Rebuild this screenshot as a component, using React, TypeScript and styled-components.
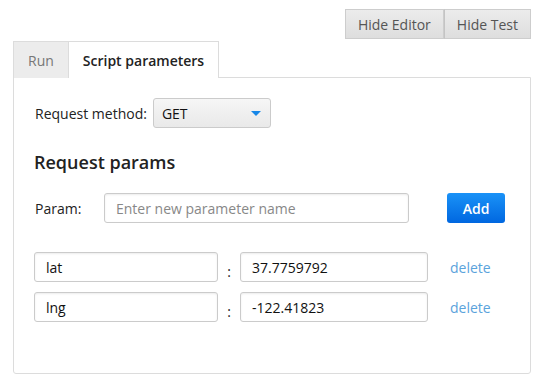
import React from 'react';
import styled, { createGlobalStyle } from 'styled-components';

const GlobalStyle = createGlobalStyle`
  body {
    margin: 0;
    background: #fff;
    font-family: "Open Sans", "Liberation Sans", sans-serif;
    font-size: 14px;
    color: #222;
  }
`;

const Page = styled.div`
  width: 542px;
  box-sizing: border-box;
  padding: 9px 11px 0 13px;
`;

const Toolbar = styled.div`
  display: flex;
  justify-content: flex-end;
  margin-bottom: 2px;
`;

const ToolButton = styled.button`
  height: 30px;
  padding: 0 12px;
  border: 1px solid #cdcdcd;
  background: linear-gradient(#ececec, #dedede);
  color: #555;
  font-family: inherit;
  font-size: 14px;
  & + & {
    border-left: 1px solid #c4c4c4;
  }
`;

const TabBar = styled.div`
  display: flex;
`;

const Tab = styled.div<{ $active?: boolean }>`
  height: 37px;
  box-sizing: border-box;
  padding: 0 14px;
  display: flex;
  align-items: center;
  border: 1px solid #dcdcdc;
  border-bottom: none;
  background: ${(p) => (p.$active ? '#fff' : '#ececec')};
  color: ${(p) => (p.$active ? '#222' : '#777')};
  font-weight: ${(p) => (p.$active ? 600 : 400)};
  margin-bottom: -1px;
  position: relative;
  & + & {
    border-left: none;
  }
`;

const Panel = styled.div`
  border: 1px solid #dcdcdc;
  border-radius: 0 0 3px 3px;
  padding: 20px 0 51px 20px;
`;

const MethodRow = styled.div`
  display: flex;
  align-items: center;
  gap: 6px;
  padding-left: 1px;
`;

const Select = styled.div`
  width: 118px;
  height: 30px;
  box-sizing: border-box;
  border: 1px solid #cbcbcb;
  border-radius: 3px;
  background: linear-gradient(#f6f6f6, #e9e9e9);
  display: flex;
  align-items: center;
  justify-content: space-between;
  padding: 0 9px 0 8px;
  color: #111;
`;

const Caret = styled.span`
  width: 0;
  height: 0;
  border-left: 5px solid transparent;
  border-right: 5px solid transparent;
  border-top: 5px solid #1787e8;
`;

const Heading = styled.h2`
  margin: 22px 0 0;
  font-size: 18px;
  line-height: 24px;
  font-weight: 600;
  color: #222;
`;

const ParamRow = styled.div`
  display: flex;
  align-items: center;
  margin-top: 19px;
`;

const Label = styled.span`
  width: 70px;
  padding-left: 1px;
  box-sizing: border-box;
`;

const TextInput = styled.input<{ $width: number }>`
  width: ${(p) => p.$width}px;
  height: 30px;
  box-sizing: border-box;
  border: 1px solid #cbcbcb;
  border-radius: 3px;
  box-shadow: inset 0 1px 2px rgba(0, 0, 0, 0.08);
  padding: 0 10px 0 11px;
  font-family: inherit;
  font-size: 14px;
  color: #111;
  &::placeholder {
    color: #888;
  }
`;

const AddButton = styled.button`
  margin-left: 38px;
  width: 58px;
  height: 30px;
  border: none;
  border-radius: 3px;
  background: linear-gradient(#1a92f7, #0067e0);
  color: #fff;
  font-family: inherit;
  font-size: 14px;
  font-weight: 600;
`;

const List = styled.div`
  display: flex;
  flex-direction: column;
  gap: 10px;
  margin-top: 29px;
`;

const PairRow = styled.div`
  display: flex;
  align-items: center;
`;

const Colon = styled.span`
  width: 22px;
  text-align: center;
  padding-top: 9px;
`;

const Delete = styled.a`
  margin-left: 22px;
  color: #5aa3dc;
  cursor: pointer;
`;

const params = [
  { name: 'lat', value: '37.7759792' },
  { name: 'lng', value: '-122.41823' },
];

export default function App() {
  return (
    <Page>
      <GlobalStyle />
      <Toolbar>
        <ToolButton>Hide Editor</ToolButton>
        <ToolButton>Hide Test</ToolButton>
      </Toolbar>
      <TabBar>
        <Tab>Run</Tab>
        <Tab $active>Script parameters</Tab>
      </TabBar>
      <Panel>
        <MethodRow>
          <span>Request method:</span>
          <Select>
            <span>GET</span>
            <Caret />
          </Select>
        </MethodRow>
        <Heading>Request params</Heading>
        <ParamRow>
          <Label>Param:</Label>
          <TextInput $width={305} placeholder="Enter new parameter name" />
          <AddButton>Add</AddButton>
        </ParamRow>
        <List>
          {params.map((p) => (
            <PairRow key={p.name}>
              <TextInput $width={184} defaultValue={p.name} />
              <Colon>:</Colon>
              <TextInput $width={188} defaultValue={p.value} />
              <Delete>delete</Delete>
            </PairRow>
          ))}
        </List>
      </Panel>
    </Page>
  );
}
